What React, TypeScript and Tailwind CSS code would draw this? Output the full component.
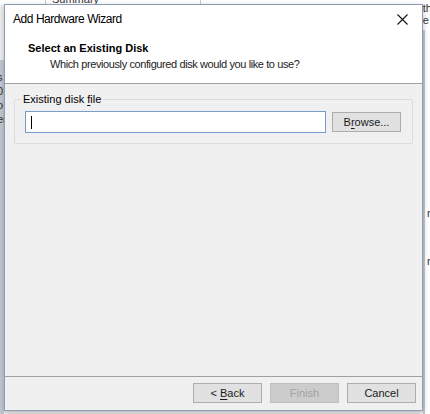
import React from 'react';

const font = { fontFamily: '"Segoe UI", "Liberation Sans", Arial, sans-serif' };

function WinButton({ pre, key1, post, disabled }: { pre?: string; key1?: string; post: string; disabled?: boolean }) {
  return (
    <div
      className={
        disabled
          ? 'flex h-[20px] w-[69px] items-center justify-center border border-[#bfbfbf] bg-[#cccccc] text-[11px] text-[#a3a3a3]'
          : 'flex h-[20px] w-[69px] items-center justify-center border border-[#adadad] bg-[#e1e1e1] text-[11px] text-[#1a1a1a]'
      }
    >
      {pre && <span className="whitespace-pre">{pre}</span>}
      {key1 && <span className="underline underline-offset-2">{key1}</span>}
      {post}
    </div>
  );
}

export default function App() {
  return (
    <div className="relative h-[414px] w-[430px] overflow-hidden bg-[#f0f0f0]" style={font}>
      {/* window behind the dialog */}
      <div className="absolute left-0 top-0 h-[5px] w-[430px] bg-white" />
      <div className="absolute left-[45px] top-0 h-[5px] w-px bg-[#c8c8c8]" />
      <div className="absolute left-[200px] top-0 h-[5px] w-px bg-[#c8c8c8]" />
      <div className="absolute left-[52px] top-[-9px] text-[11px] text-[#333]">Summary</div>
      <div className="absolute left-0 top-[60px] h-[354px] w-[4px] bg-[#c4cad3]" />
      <div className="absolute left-[-3px] top-[70px] text-[11px] leading-[14px] text-[#333]">
        s<br />
        0<br />
        o<br />
        er
      </div>
      <div className="absolute right-0 top-0 h-[414px] w-[7px] bg-white" />
      <div className="absolute right-[5px] top-[30px] h-[384px] w-[2px] bg-[#c4cad3]" />
      <div className="absolute right-[-2px] top-[2px] text-[11px] leading-[12px] text-[#333]">
        th<br />
        e
      </div>
      <div className="absolute right-[-3px] top-[205px] text-[11px] text-[#333]">n</div>
      <div className="absolute right-[-3px] top-[253px] text-[11px] text-[#333]">n</div>

      {/* dialog */}
      <div className="absolute left-[4px] top-[4px] flex h-[407px] w-[419px] flex-col border border-[#8c9db8] bg-[#f0f0f0] shadow-[0_2px_6px_rgba(0,0,0,0.25)]">
        <div className="flex h-[78px] flex-col bg-white">
          <div className="flex h-[28px] items-center justify-between pl-[8px] pr-[14px]">
            <span className="text-[12px] tracking-[-0.45px] text-black">Add Hardware Wizard</span>
            <svg width="11" height="11" viewBox="0 0 11 11" className="mt-[1px]">
              <path d="M0.5 0.5 L10.5 10.5 M10.5 0.5 L0.5 10.5" stroke="#111" strokeWidth="1.1" />
            </svg>
          </div>
          <div className="pl-[23px] pt-[8px] text-[11px] font-bold leading-[14px] text-black">Select an Existing Disk</div>
          <div className="pl-[45px] pt-[2px] text-[11px] leading-[14px] tracking-[-0.4px] text-[#222]">
            Which previously configured disk would you like to use?
          </div>
        </div>
        <div className="h-px bg-[#a0a0a0]" />

        <div className="flex flex-1 flex-col px-[9px] pt-[15px]">
          <div className="relative h-[45px] rounded-[2px] border border-[#dcdcdc]">
            <span className="absolute left-[6px] top-[-8px] bg-[#f0f0f0] px-[2px] text-[11px] leading-[14px] text-black">
              Existing disk <span className="underline underline-offset-2">f</span>ile
            </span>
            <div className="flex items-center gap-[6px] pl-[10px] pr-[11px] pt-[11px]">
              <div className="flex h-[22px] flex-1 items-center border border-[#7a9ccc] bg-white pl-[5px]">
                <div className="h-[13px] w-px bg-black" />
              </div>
              <div className="flex h-[20px] w-[69px] items-center justify-center border border-[#adadad] bg-[#e1e1e1] text-[11px] text-[#1a1a1a]">
                B<span className="underline underline-offset-2">r</span>owse...
              </div>
            </div>
          </div>
        </div>

        <div className="h-px bg-[#a0a0a0]" />
        <div className="flex h-[33px] items-center justify-end gap-[8px] pb-[1px] pr-[6px]">
          <WinButton pre="< " key1="B" post="ack" />
          <WinButton post="Finish" disabled />
          <WinButton post="Cancel" />
        </div>
      </div>
    </div>
  );
}
